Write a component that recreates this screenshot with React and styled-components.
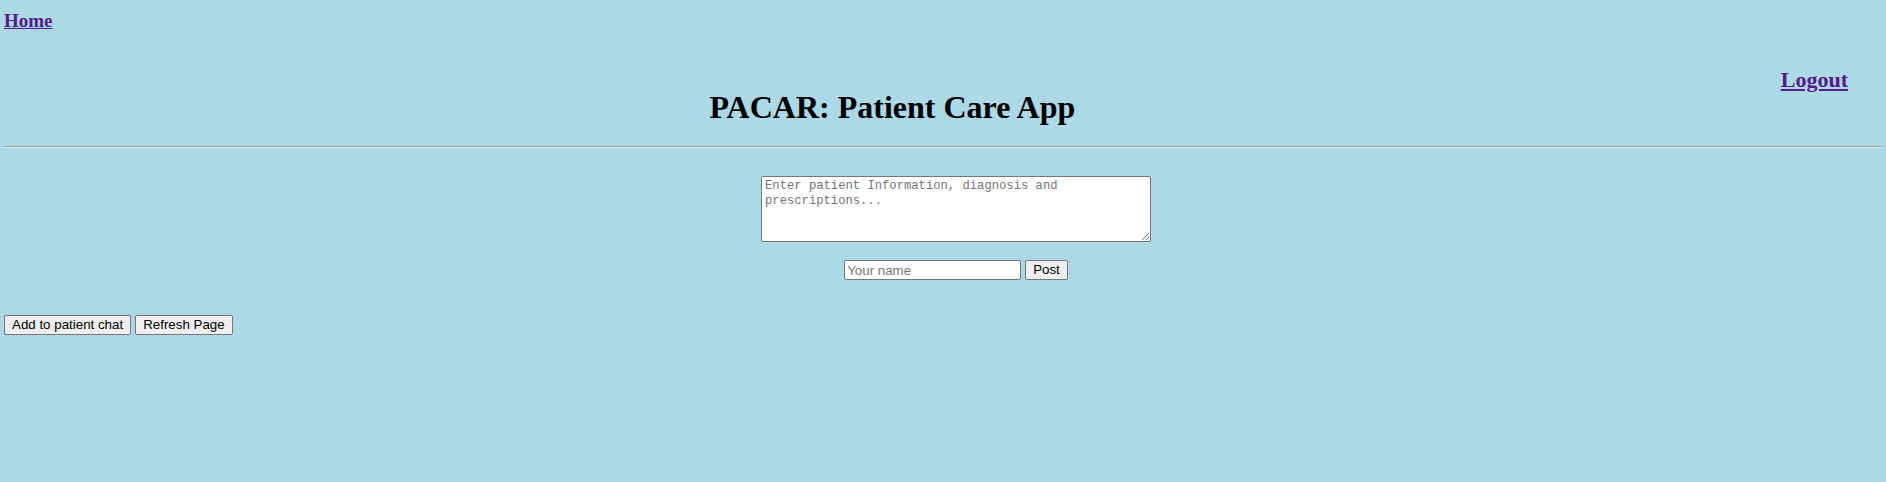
import React from 'react';
import styled, { createGlobalStyle } from 'styled-components';

const GlobalStyle = createGlobalStyle`
	body {
		margin: 0;
		background-color: #add8e6;
		font-family: "Liberation Serif", "Times New Roman", serif;
	}
`;

const Page = styled.div`
	padding: 0 4px;
	height: 482px;
	box-sizing: border-box;
`;

const NavLink = styled.a`
	display: inline-block;
	color: #551a8b;
	font-weight: bold;
	font-size: ${(p) => p.size || 19}px;
	text-decoration: underline;
	cursor: pointer;
`;

const TopBar = styled.div`
	padding-top: 10px;
	height: 22px;
`;

const Header = styled.header`
	display: flex;
	align-items: flex-start;
	margin-top: 22px;
`;

const Title = styled.h1`
	flex: 1;
	margin: 35px 0 0;
	text-align: center;
	font-size: 32px;
	font-weight: bold;
	color: #000;
`;

const LogoutWrap = styled.div`
	margin: 13px 34px 0 0;
`;

const Divider = styled.hr`
	margin: 20px 0 0;
	border: none;
	border-top: 1px solid #9a9a9a;
	border-bottom: 1px solid #eeeeee;
	height: 0;
`;

const Form = styled.form`
	display: flex;
	flex-direction: column;
	align-items: center;
	padding-left: 26px;
	margin-top: 28px;
	gap: 18px;
`;

const NoteArea = styled.textarea`
	width: 390px;
	height: 66px;
	box-sizing: border-box;
	padding: 2px 3px;
	border: 1px solid #767676;
	border-radius: 2px;
	background: #fff;
	font-family: "Liberation Mono", "DejaVu Sans Mono", monospace;
	font-size: 12.2px;
	line-height: 15px;
	resize: both;

	&::placeholder {
		color: #757575;
	}
`;

const Row = styled.div`
	display: flex;
	align-items: center;
	gap: 4px;
`;

const NameInput = styled.input`
	width: 177px;
	height: 20px;
	box-sizing: border-box;
	padding: 1px 2px;
	border: 1px solid #767676;
	border-radius: 2px;
	background: #fff;
	font-family: "Liberation Sans", Arial, sans-serif;
	font-size: 13.33px;

	&::placeholder {
		color: #757575;
	}
`;

const Button = styled.button`
	height: 20px;
	box-sizing: border-box;
	padding: 1px 7px;
	border: 1px solid #767676;
	border-radius: 2px;
	background-color: #efefef;
	color: #000;
	font-family: "Liberation Sans", Arial, sans-serif;
	font-size: 13.33px;
	line-height: 16px;
	cursor: pointer;

	&:hover {
		background-color: #e5e5e5;
	}
`;

const Actions = styled.div`
	display: flex;
	gap: 4px;
	margin-top: 35px;
`;

function App() {
	return (
		<>
			<GlobalStyle />
			<Page>
				<TopBar>
					<NavLink href="#">Home</NavLink>
				</TopBar>
				<Header>
					<Title>PACAR: Patient Care App</Title>
					<LogoutWrap>
						<NavLink href="#" size={22}>Logout</NavLink>
					</LogoutWrap>
				</Header>
				<Divider />
				<Form onSubmit={(e) => e.preventDefault()}>
					<NoteArea placeholder="Enter patient Information, diagnosis and prescriptions..." />
					<Row>
						<NameInput placeholder="Your name" />
						<Button type="submit">Post</Button>
					</Row>
				</Form>
				<Actions>
					<Button type="button">Add to patient chat</Button>
					<Button type="button">Refresh Page</Button>
				</Actions>
			</Page>
		</>
	);
}

export default App;
